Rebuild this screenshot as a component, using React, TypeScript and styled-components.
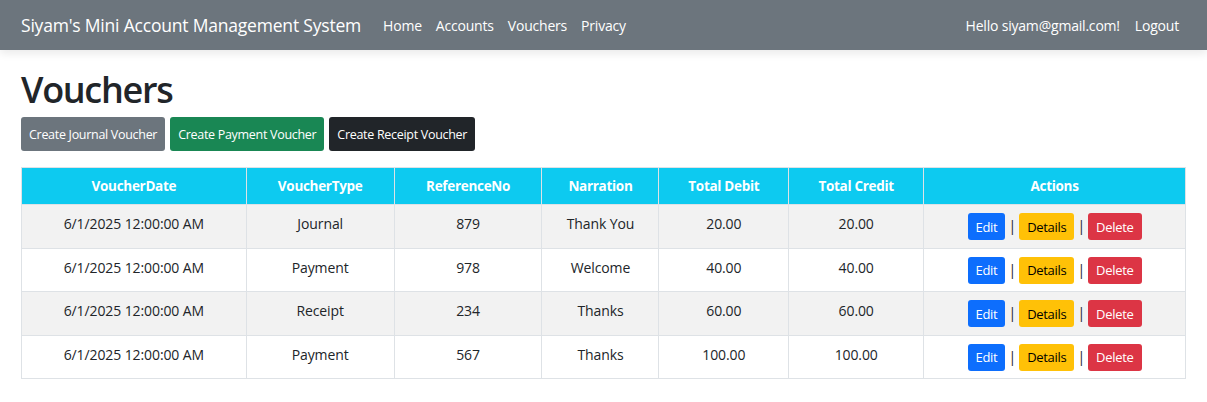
import React from "react";
import styled, { createGlobalStyle } from "styled-components";

const Global = createGlobalStyle`
  html, body { margin: 0; padding: 0; background: #fff; }
  body { font-family: "Open Sans", "Noto Sans", sans-serif; color: #212529; }
  * { box-sizing: border-box; }
`;

const Nav = styled.nav`
  height: 50px;
  background: #6c757d;
  display: flex;
  align-items: center;
  padding: 0 28px 0 21px;
  box-shadow: 0 4px 8px rgba(0,0,0,0.08);
`;

const Brand = styled.span`
  color: #fff;
  font-size: 17.5px;
  margin-right: 22px;
  letter-spacing: -0.2px;
`;

const NavLinks = styled.div`
  display: flex;
  gap: 14px;
  flex: 1;
`;

const NavLink = styled.a`
  color: #fff;
  font-size: 14px;
  text-decoration: none;
  letter-spacing: -0.2px;
`;

const NavRight = styled.div`
  display: flex;
  gap: 15px;
`;

const Main = styled.main`
  padding: 18px 21px 0 21px;
`;

const Title = styled.h1`
  margin: 0 0 5px 0;
  font-size: 36px;
  font-weight: 600;
  line-height: 44px;
  letter-spacing: -1.3px;
`;

const ButtonRow = styled.div`
  display: flex;
  gap: 5px;
  margin-bottom: 16px;
`;

const Btn = styled.button<{ $bg: string; $fg?: string }>`
  background: ${(p) => p.$bg};
  color: ${(p) => p.$fg ?? "#fff"};
  border: none;
  border-radius: 3px;
  height: 34px;
  padding: 0 8px;
  font-family: inherit;
  font-size: 12.5px;
  letter-spacing: -0.3px;
`;

const Table = styled.table`
  width: 100%;
  border-collapse: collapse;
  font-size: 14px;
`;

const Th = styled.th`
  background: #0dcaf0;
  color: #fff;
  font-weight: 700;
  height: 37px;
  border: 1px solid #dee2e6;
  text-align: center;
  letter-spacing: -0.3px;
  font-size: 13.5px;
`;

const Tr = styled.tr<{ $striped: boolean }>`
  background: ${(p) => (p.$striped ? "#f2f2f2" : "#fff")};
`;

const Td = styled.td`
  border: 1px solid #dee2e6;
  text-align: center;
  height: 43.5px;
  padding: 0 8px 5px;
  letter-spacing: -0.1px;
`;

const ActionCell = styled.td`
  border: 1px solid #dee2e6;
  text-align: center;
  padding: 1px 0 0;
`;

const Actions = styled.div`
  display: inline-flex;
  align-items: center;
  gap: 3px;
`;

const SmallBtn = styled.button<{ $bg: string; $fg?: string }>`
  background: ${(p) => p.$bg};
  color: ${(p) => p.$fg ?? "#fff"};
  border: none;
  border-radius: 3px;
  height: 27px;
  padding: 0 8px;
  font-family: inherit;
  font-size: 13px;
  letter-spacing: -0.3px;
`;

const Sep = styled.span`
  font-size: 14px;
  color: #212529;
  margin-top: -2px;
`;

const rows = [
  ["6/1/2025 12:00:00 AM", "Journal", "879", "Thank You", "20.00", "20.00"],
  ["6/1/2025 12:00:00 AM", "Payment", "978", "Welcome", "40.00", "40.00"],
  ["6/1/2025 12:00:00 AM", "Receipt", "234", "Thanks", "60.00", "60.00"],
  ["6/1/2025 12:00:00 AM", "Payment", "567", "Thanks", "100.00", "100.00"],
];

const widths = [225, 148, 148, 117, 130, 135, 262];

export default function App() {
  return (
    <>
      <Global />
      <Nav>
        <Brand>Siyam's Mini Account Management System</Brand>
        <NavLinks>
          <NavLink>Home</NavLink>
          <NavLink>Accounts</NavLink>
          <NavLink>Vouchers</NavLink>
          <NavLink>Privacy</NavLink>
        </NavLinks>
        <NavRight>
          <NavLink>Hello siyam@gmail.com!</NavLink>
          <NavLink>Logout</NavLink>
        </NavRight>
      </Nav>
      <Main>
        <Title>Vouchers</Title>
        <ButtonRow>
          <Btn $bg="#6c757d">Create Journal Voucher</Btn>
          <Btn $bg="#198754">Create Payment Voucher</Btn>
          <Btn $bg="#212529">Create Receipt Voucher</Btn>
        </ButtonRow>
        <Table>
          <colgroup>
            {widths.map((w, i) => (
              <col key={i} style={{ width: w }} />
            ))}
          </colgroup>
          <thead>
            <tr>
              <Th>VoucherDate</Th>
              <Th>VoucherType</Th>
              <Th>ReferenceNo</Th>
              <Th>Narration</Th>
              <Th>Total Debit</Th>
              <Th>Total Credit</Th>
              <Th>Actions</Th>
            </tr>
          </thead>
          <tbody>
            {rows.map((r, i) => (
              <Tr key={i} $striped={i % 2 === 0}>
                {r.map((c, j) => (
                  <Td key={j}>{c}</Td>
                ))}
                <ActionCell>
                  <Actions>
                    <SmallBtn $bg="#0d6efd">Edit</SmallBtn>
                    <Sep>|</Sep>
                    <SmallBtn $bg="#ffc107" $fg="#000">Details</SmallBtn>
                    <Sep>|</Sep>
                    <SmallBtn $bg="#dc3545">Delete</SmallBtn>
                  </Actions>
                </ActionCell>
              </Tr>
            ))}
          </tbody>
        </Table>
      </Main>
    </>
  );
}
